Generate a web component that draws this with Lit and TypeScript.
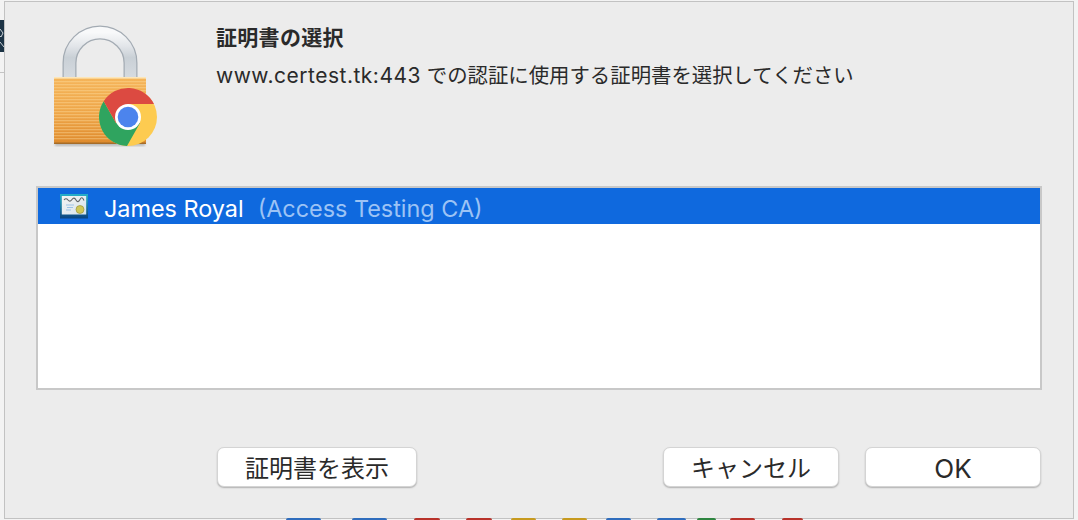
import { LitElement, html, css, svg } from "lit";
import { customElement } from "lit/decorators.js";

const BLUE = "#2f6dbd", RED = "#b8322a", GOLD = "#c79a1e", GREEN = "#2e8540";
const CHIPS: [number, number, string][] = [
  [286, 35, BLUE], [352, 35, BLUE], [414, 26, RED], [466, 26, RED], [511, 25, GOLD], [562, 25, GOLD],
  [606, 25, BLUE], [657, 29, BLUE], [697, 19, GREEN], [730, 25, RED], [782, 21, RED],
];

const stripes = [];
for (let y = 80; y < 140; y += 3) {
  stripes.push(svg`<rect x="54" y=${y} width="92" height="1.3" fill="#ffe2a8" opacity="0.38"></rect>`);
}

const SHACKLE = "M69.5 77 V62 A30.5 30.5 0 0 1 130.5 62 V77";

const lockIcon = html`<svg class="lock" viewBox="45 18 120 130" width="120" height="130">
  <defs>
    <linearGradient id="body" x1="0" y1="0" x2="0" y2="1">
      <stop offset="0" stop-color="#f5b55a"></stop>
      <stop offset="0.55" stop-color="#eea548"></stop>
      <stop offset="1" stop-color="#de8a2c"></stop>
    </linearGradient>
    <linearGradient id="metal" x1="0" y1="0" x2="0" y2="1">
      <stop offset="0" stop-color="#f8f9fa"></stop>
      <stop offset="0.3" stop-color="#e2e5e9"></stop>
      <stop offset="0.55" stop-color="#c9d0d6"></stop>
      <stop offset="1" stop-color="#d6dbe0"></stop>
    </linearGradient>
    <filter id="soft" x="-10%" y="-10%" width="120%" height="130%">
      <feGaussianBlur stdDeviation="1"></feGaussianBlur>
    </filter>
  </defs>
  <path d=${SHACKLE} fill="none" stroke="#a3abb3" stroke-width="14"></path>
  <path d=${SHACKLE} fill="none" stroke="url(#metal)" stroke-width="11.5"></path>
  <rect x="55" y="141" width="90" height="4" fill="#8a8a8a" opacity="0.5" filter="url(#soft)"></rect>
  <rect x="54" y="76" width="92" height="67" rx="2" fill="url(#body)"></rect>
  ${stripes}
  <rect x="54" y="76" width="92" height="1.6" fill="#fde6b8"></rect>
  <rect x="54" y="141.5" width="92" height="1.5" fill="#a66c28"></rect>
  <circle cx="128" cy="116" r="29" fill="#fdcb50"></circle>
  <path d="M103.7 100.2 A29 29 0 0 0 127 145 L140 122 L116 122 Z" fill="#2fa45f"></path>
  <path d="M103.7 100.2 A29 29 0 0 1 154 103 L128 103 L116 122 Z" fill="#dc4a41"></path>
  <circle cx="128" cy="116" r="13" fill="#fff"></circle>
  <circle cx="128" cy="116" r="10.3" fill="#4c84ed"></circle>
</svg>`;

const certIcon = html`<svg class="cert" viewBox="0 0 28 25" width="28" height="25">
  <defs>
    <linearGradient id="frame" x1="0" y1="0" x2="0" y2="1">
      <stop offset="0" stop-color="#26b0c8"></stop>
      <stop offset="1" stop-color="#0a4480"></stop>
    </linearGradient>
    <linearGradient id="paper" x1="0" y1="0" x2="1" y2="1">
      <stop offset="0" stop-color="#f4f4f2"></stop>
      <stop offset="1" stop-color="#d5e4ee"></stop>
    </linearGradient>
  </defs>
  <rect x="0" y="0" width="28" height="24.5" fill="url(#frame)"></rect>
  <rect x="1.8" y="2" width="24.4" height="18.5" fill="url(#paper)"></rect>
  <path d="M4 6 Q6 3.5 8 6 T12 5.5 T16 6 T20 5.5 T24 6.5" fill="none" stroke="#5f6366" stroke-width="1.1"></path>
  <path d="M6 11 H14 M7 13.5 H13 M6 16 H11" stroke="#9cc3e6" stroke-width="1"></path>
  <circle cx="20" cy="15.5" r="4" fill="#cfc858" stroke="#8e8a32" stroke-width="0.6"></circle>
</svg>`;

const backScrap = html`<svg class="back-dark" viewBox="0 0 4 32" width="4" height="32">
  <rect width="4" height="32" fill="#1c3345"></rect>
  <path d="M0 9 L3 13 L1 17 L0 16 M0 22 L4 27" fill="none" stroke="#c9d0d6" stroke-width="1"></path>
</svg>`;

@customElement("app-root")
export class AppRoot extends LitElement {
  static styles = css`
    :host {
      display: block;
      position: relative;
      width: 1078px;
      height: 520px;
      overflow: hidden;
      background: #f3f3f3;
      font-family: Inter, "Noto Sans CJK JP", sans-serif;
      color: #2a2a2a;
    }
    .back-dark {
      position: absolute;
      left: 0;
      top: 20px;
    }
    .back-line {
      position: absolute;
      left: 0;
      top: 72px;
      width: 4px;
      height: 1px;
      background: #c4c4c4;
    }
    .chip {
      position: absolute;
      bottom: 0;
      height: 2px;
      border-radius: 2px 2px 0 0;
    }
    .dialog {
      position: relative;
      box-sizing: border-box;
      display: flex;
      flex-direction: column;
      width: 1070px;
      height: 518px;
      margin: 1px 4px 0;
      background: #ececec;
      border: 1px solid #c2c2c2;
    }
    .header {
      display: flex;
      height: 184px;
      flex: none;
    }
    .lock {
      flex: none;
      margin: 17px 0 0 40px;
    }
    .texts {
      margin-left: 51px;
      padding-top: 22px;
    }
    .title {
      font-size: 21px;
      font-weight: 700;
      line-height: 28px;
      letter-spacing: 0.3px;
    }
    .message {
      margin-top: 11px;
      font-size: 20.4px;
      line-height: 26px;
    }
    .host-name {
      font-size: 21px;
      letter-spacing: 0.5px;
    }
    .list {
      box-sizing: border-box;
      flex: none;
      height: 204px;
      margin: 0 31px;
      background: #fff;
      border: 2px solid #c8c8c8;
    }
    .row {
      display: flex;
      align-items: center;
      box-sizing: border-box;
      height: 36px;
      padding: 4px 0 0 22px;
      background: #0f69de;
      color: #fff;
      font-size: 23.4px;
    }
    .cert {
      flex: none;
      margin: -4px 16px 0 0;
    }
    .issuer {
      margin-left: 14px;
      color: #9cc3f5;
    }
    .footer {
      display: flex;
      margin: 57px 32px 0 212px;
    }
    button {
      box-sizing: border-box;
      height: 40px;
      padding: 3px 0 0;
      background: #fff;
      border: 1px solid #d4d4d4;
      border-radius: 7px;
      box-shadow: 0 1px 1.5px rgba(0, 0, 0, 0.25);
      color: #2a2a2a;
      font-family: inherit;
      font-size: 24px;
      line-height: 34px;
    }
    .show { width: 200px; }
    .spacer { flex: 1; }
    .cancel { width: 176px; margin-right: 26px; }
    .ok { width: 176px; font-size: 26px; }
  `;

  render() {
    return html`
      ${backScrap}
      <div class="back-line"></div>
      <div class="dialog">
        <div class="header">
          ${lockIcon}
          <div class="texts">
            <div class="title">証明書の選択</div>
            <div class="message"><span class="host-name">www.certest.tk:443</span> での認証に使用する証明書を選択してください</div>
          </div>
        </div>
        <div class="list">
          <div class="row">${certIcon}<span>James Royal</span><span class="issuer">(Access Testing CA)</span></div>
        </div>
        <div class="footer">
          <button class="show">証明書を表示</button>
          <div class="spacer"></div>
          <button class="cancel">キャンセル</button>
          <button class="ok">OK</button>
        </div>
      </div>
      ${CHIPS.map(
        ([x, w, c]) => html`<div class="chip" style="left:${x}px;width:${w}px;background:${c}"></div>`
      )}
    `;
  }
}
